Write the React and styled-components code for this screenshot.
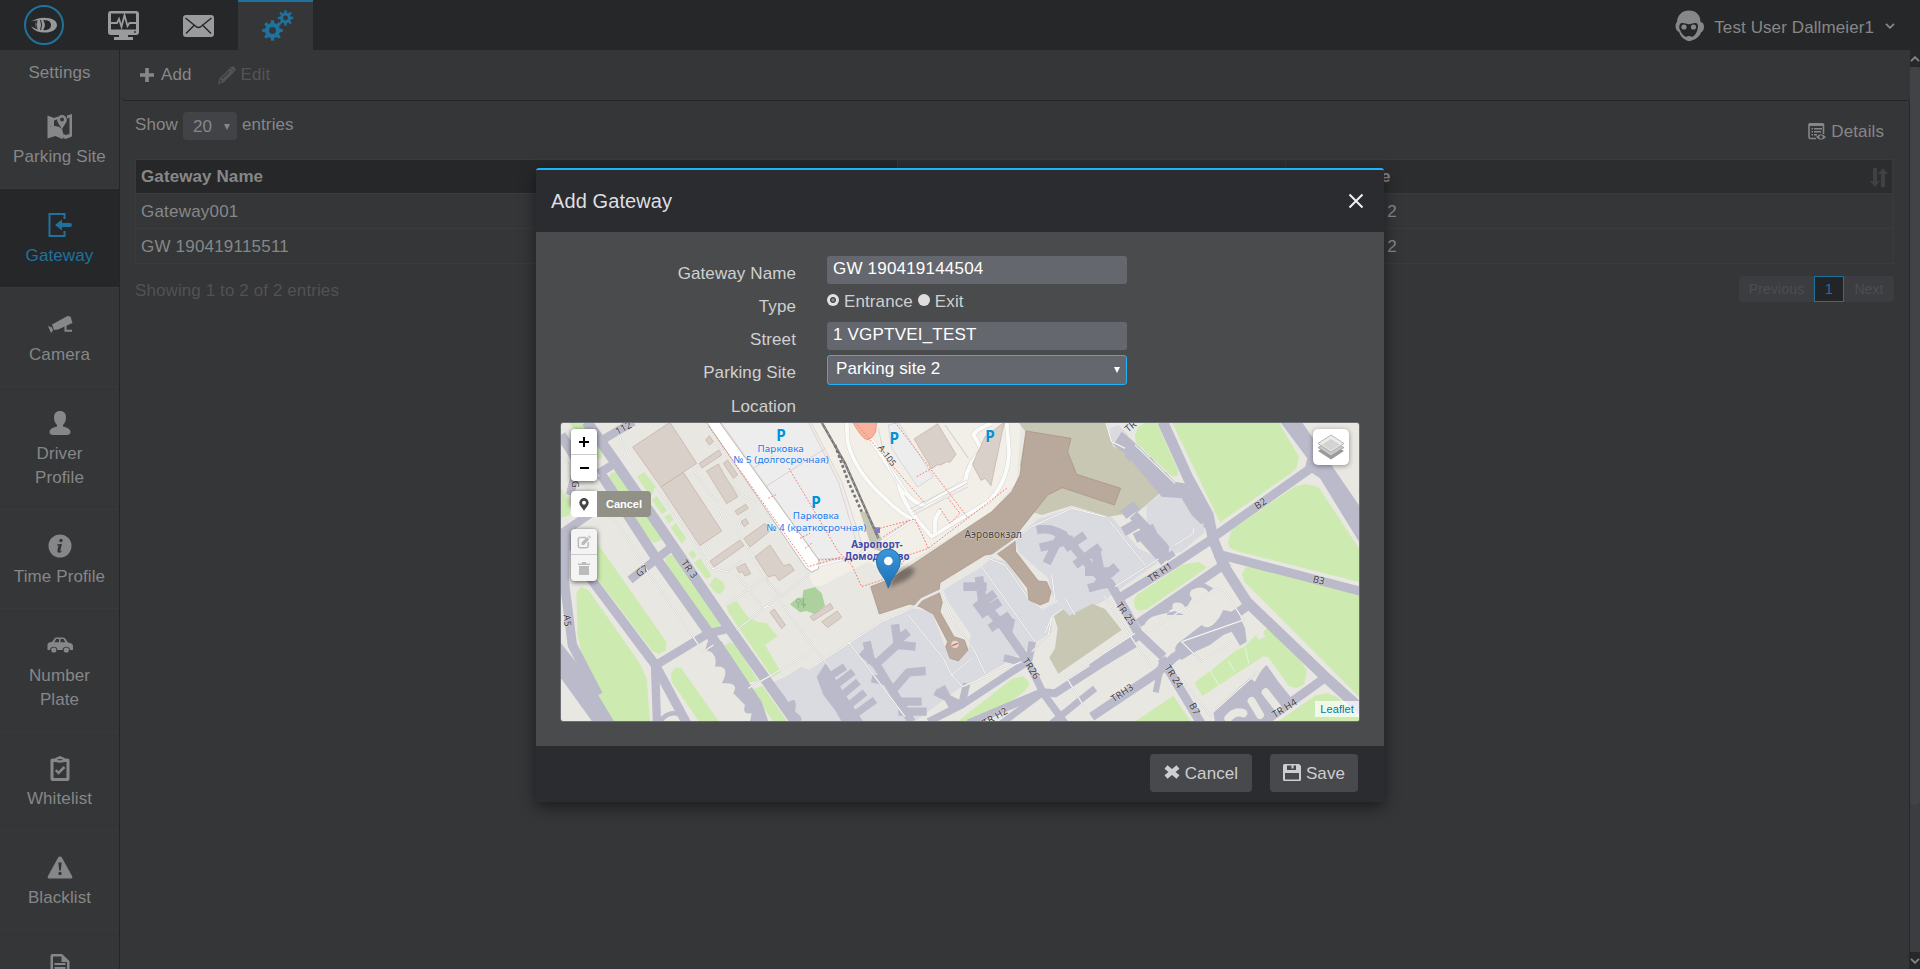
import React from "react";
import styled, { createGlobalStyle } from "styled-components";

const GlobalStyle = createGlobalStyle`
  * { box-sizing: border-box; }
  html, body { margin: 0; padding: 0; height: 100%; overflow: hidden; }
  body { background: #353638; color: #868788; font: 17px/24px "Liberation Sans", Arial, sans-serif; letter-spacing: 0.1px; }
  svg { display: block; }
`;

const Screen = styled.div`
  width: 1920px;
  height: 969px;
  display: flex;
  flex-direction: column;
  position: relative;
  overflow: hidden;
`;

/* ---------- top bar ---------- */
const TopBar = styled.header`
  height: 50px;
  flex: none;
  display: flex;
  background: #262729;
`;
const TopTab = styled.div`
  width: ${(p) => p.$w || 75}px;
  height: 50px;
  display: flex;
  align-items: center;
  justify-content: center;
  color: ${(p) => (p.$active ? "#20729c" : "#9a9b9c")};
  background: ${(p) => (p.$active ? "#353638" : "transparent")};
  border-top: 2px solid ${(p) => (p.$active ? "#20729c" : "transparent")};
  padding-left: ${(p) => (p.$active ? 5 : 0)}px;
  padding-bottom: ${(p) => p.$lift || 1}px;
`;
const UserMenu = styled.div`
  margin-left: auto;
  padding: 2px 25px 0 0;
  display: flex;
  align-items: center;
  color: #868788;
`;
const UserName = styled.span`
  margin: 3px 11px 0 9px;
`;

/* ---------- main frame ---------- */
const Frame = styled.div`
  flex: 1;
  min-height: 0;
  display: flex;
`;
const Sidebar = styled.nav`
  width: 120px;
  flex: none;
  border-right: 1px solid #242527;
  overflow: hidden;
  text-align: center;
`;
const SidebarTitle = styled.div`
  padding: 11px 0 5px;
`;
const SideItem = styled.div`
  padding: 24px 8px 19px;
  border-bottom: 1px solid #393a3c;
  color: ${(p) => (p.$active ? "#20729c" : "#868788")};
  background: ${(p) => (p.$active ? "#262729" : "transparent")};
`;
const SideIcon = styled.div`
  height: 24px;
  margin-bottom: 7px;
  display: flex;
  align-items: center;
  justify-content: center;
`;
const SideLabel = styled.div`
  margin: 0 -8px;
  white-space: pre-line;
`;
const Main = styled.main`
  flex: 1;
  min-width: 0;
  display: flex;
  flex-direction: column;
`;
const Toolbar = styled.div`
  height: 51px;
  flex: none;
  margin-left: 2px;
  border-bottom: 1px solid #242527;
  border-radius: 0 0 4px 4px;
  display: flex;
  padding: 13px 0 0 18px;
  gap: 26px;
`;
const Tool = styled.div`
  display: flex;
  gap: ${(p) => p.$gap}px;
  height: 24px;
  color: ${(p) => (p.$disabled ? "#535456" : "#868788")};
  svg { margin-top: ${(p) => p.$top}px; }
`;
const Content = styled.section`
  flex: 1;
  min-height: 0;
  border-right: 1px solid #262729;
  padding: 11px 15px 0 15px;
`;
const ListHead = styled.div`
  display: flex;
  justify-content: space-between;
  height: 47px;
`;
const Length = styled.div`
  display: flex;
  gap: 5px;
  line-height: 26px;
`;
const LengthSelect = styled.div`
  width: 54px;
  height: 28px;
  border-radius: 4px;
  background: #424346;
  display: flex;
  justify-content: space-between;
  align-items: center;
  padding: 2px 7px 0 10px;
`;
const Details = styled.div`
  display: flex;
  gap: 5px;
  padding: 8px 10px 0 0;
  svg { margin-top: 3px; }
`;
const Table = styled.div`
  display: grid;
  grid-template-columns: 762px 388px 1fr;
  border: 1px solid #3a3b3d;
  border-bottom: 0;
`;
const HeadCell = styled.div`
  height: 34px;
  display: flex;
  align-items: center;
  justify-content: space-between;
  padding: 1px 4px 0 5px;
  font-weight: bold;
  background: ${(p) => (p.$sorted ? "#262729" : "#2c2d2f")};
  border-right: 1px solid #353638;
  border-bottom: 1px solid #3a3b3d;
  color: #868788;
  svg { margin-left: auto; color: #404144; }
`;
const Cell = styled.div`
  height: 35px;
  padding: 6px 5px 4px;
  border-bottom: 1px solid #3a3b3d;
  letter-spacing: 0.2px;
`;
const ListFoot = styled.div`
  display: flex;
  justify-content: space-between;
  padding-top: 12px;
  color: #515254;
`;
const Info = styled.div`
  padding-top: 3px;
`;
const Pager = styled.div`
  display: flex;
  height: 26px;
  background: #3c3d40;
  border-radius: 4px;
  font-size: 14px;
`;
const PageBtn = styled.div`
  width: ${(p) => p.$w}px;
  text-align: center;
  line-height: 25px;
  color: ${(p) => (p.$active ? "#20729c" : "#4c4d50")};
  background: ${(p) => (p.$active ? "#232426" : "transparent")};
  border: 1px solid ${(p) => (p.$active ? "#20729c" : "transparent")};
`;
const Scrollbar = styled.div`
  width: 10px;
  flex: none;
  display: flex;
  flex-direction: column;
  background: #3c3d41;
`;
const ScrollBtn = styled.div`
  height: 17px;
  background: #27282a;
  display: flex;
  align-items: center;
  justify-content: center;
`;
const Thumb = styled.div`
  height: 738px;
  margin-bottom: 147px;
  background: #424347;
  border-radius: 5px;
`;

/* ---------- dialog ---------- */
const Backdrop = styled.div`
  position: absolute;
  inset: 0;
  display: flex;
  justify-content: center;
  align-items: flex-start;
  padding-top: 168px;
`;
const Dialog = styled.div`
  width: 848px;
  border-top: 2px solid #1eb3fb;
  border-radius: 3px;
  overflow: hidden;
  box-shadow: 0 5px 15px rgba(0, 0, 0, 0.5);
  color: #cfd0d1;
`;
const DialogHead = styled.div`
  height: 62px;
  background: #2b2c30;
  display: flex;
  align-items: center;
  justify-content: space-between;
  padding: 0 20px 0 15px;
  font-size: 20px;
  color: #dedfe0;
`;
const DialogBody = styled.div`
  background: #4a4b4d;
  padding: 24px 24px 24px;
`;
const FormRow = styled.div`
  display: grid;
  grid-template-columns: 236px 300px;
  column-gap: 31px;
  height: ${(p) => p.$h || 33}px;
`;
const Label = styled.div`
  text-align: right;
  line-height: 35px;
`;
const Field = styled.div`
  height: 28px;
  line-height: 26px;
  background: #65676f;
  border-radius: 3px;
  padding-left: 6px;
  color: #fff;
  letter-spacing: 0.2px;
`;
const SelectField = styled.div`
  height: 30px;
  line-height: 26px;
  background: #65676f;
  border: 1px solid #1eb3fb;
  border-radius: 3px;
  padding: 0 6px 2px 8px;
  color: #fff;
  display: flex;
  justify-content: space-between;
  align-items: center;
  svg { margin-top: 2px; }
`;
const RadioGroup = styled.div`
  display: flex;
  height: 24px;
  line-height: 25px;
`;
const Radio = styled.span`
  width: 12px;
  height: 12px;
  margin: 5px 5px 0 0;
  border-radius: 50%;
  background: ${(p) =>
    p.$on
      ? "radial-gradient(circle, #8a8b8c 0 1px, #4c4d50 2px 2.6px, #e2e2e2 3.5px)"
      : "#dedede"};
`;
const RadioText = styled.span`
  margin-right: 5px;
`;
const DialogFoot = styled.div`
  height: 56px;
  background: #2b2c30;
  display: flex;
  justify-content: flex-end;
  gap: 18px;
  padding: 8px 26px 0 0;
`;
const FootButton = styled.div`
  width: ${(p) => p.$w}px;
  height: 38px;
  border-radius: 4px;
  background: #48494d;
  color: #cdcecf;
  display: flex;
  align-items: center;
  justify-content: center;
  gap: 5px;
  padding-top: 1px;
  svg { margin-top: -3px; }
`;

/* ---------- map ---------- */
const MapBox = styled.div`
  position: relative;
  width: 800px;
  height: 300px;
  border: 1px solid #6a6c73;
  border-radius: 3px;
  overflow: hidden;
`;
const ControlStack = styled.div`
  position: absolute;
  left: 10px;
  top: 6px;
  width: 81px;
  display: flex;
  flex-direction: column;
`;
const ControlGroup = styled.div`
  width: 26px;
  border-radius: 4px;
  box-shadow: 0 1px 5px rgba(0, 0, 0, 0.65);
  margin-bottom: 10px;
`;
const ControlButton = styled.div`
  width: 26px;
  height: 26px;
  display: flex;
  align-items: center;
  justify-content: center;
  background: ${(p) => (p.$disabled ? "#f4f4f4" : "#fff")};
  color: ${(p) => (p.$disabled ? "#bbb" : "#464646")};
  border-radius: ${(p) => p.$radius || "4px"};
  border-bottom: ${(p) => (p.$line ? "1px solid #ccc" : "0")};
`;
const DrawRow = styled.div`
  display: flex;
  height: 26px;
  margin-bottom: 12px;
`;
const DrawAction = styled.div`
  width: 54px;
  background: #919187;
  color: #fff;
  font-size: 11px;
  font-weight: bold;
  line-height: 26px;
  letter-spacing: 0;
  text-align: center;
  border-radius: 0 4px 4px 0;
`;
const LayersButton = styled.div`
  position: absolute;
  right: 10px;
  top: 6px;
  width: 36px;
  height: 36px;
  background: #fff;
  border-radius: 5px;
  box-shadow: 0 1px 5px rgba(0, 0, 0, 0.4);
  display: flex;
  align-items: center;
  justify-content: center;
`;
const Attribution = styled.div`
  position: absolute;
  right: 0;
  bottom: 4px;
  height: 16px;
  padding: 0 5px;
  background: rgba(255, 255, 255, 0.7);
  color: #0078a8;
  font-size: 11px;
  line-height: 16px;
`;

const I = ({ w, h = w, vb, children }) => (
  <svg width={w} height={h} viewBox={vb || `0 0 ${w} ${h}`} fill="currentColor">
    {children}
  </svg>
);

const gearPath = (cx, cy, r, tooth, n) => {
  let d = "";
  const step = (Math.PI * 2) / n;
  for (let i = 0; i < n; i++) {
    const a = i * step - Math.PI / 2;
    [[-0.29, r], [-0.19, r + tooth], [0.19, r + tooth], [0.29, r]].forEach(([o, rad], k) => {
      const t = a + o * step;
      d += `${i === 0 && k === 0 ? "M" : "L"}${(cx + Math.cos(t) * rad).toFixed(2)},${(cy + Math.sin(t) * rad).toFixed(2)}`;
    });
  }
  const h = r * 0.45;
  return `${d}ZM${cx - h},${cy}a${h},${h} 0 1,0 ${2 * h},0a${h},${h} 0 1,0 ${-2 * h},0Z`;
};

const LogoIcon = () => (
  <I w={40}>
    <circle cx="20" cy="20" r="19" fill="none" stroke="#20729c" strokeWidth="2" />
    <path fillRule="evenodd" fill="#97989a" d="M7 16.500c4-2.500 8-3.800 13-3.800 8 0 13 3 13 7.300s-5 7.600-12 7.600c-6 0-11-1.500-14-6.600 2 1.600 4 2.600 6 3-2.500-3.500-2-6.500 0-8.500-2 0-4 .2-6 1zM19 15.500c2.500 2.500 2.500 7 0 9.500 5 .8 8-1.500 8-5s-3-5.500-8-4.500z" />
    <ellipse cx="14.500" cy="20" rx="2" ry="4.800" fill="#97989a" />
    <path d="M13 15.200q-2 4.600 0 9.200M16.500 15q2.300 5 0 10" fill="none" stroke="#262729" strokeWidth="1" />
  </I>
);
const MonitorIcon = () => (
  <I w={31} h={30}>
    <path fillRule="evenodd" d="M3 0h25a3 3 0 0 1 3 3v18a3 3 0 0 1-3 3H3a3 3 0 0 1-3-3V3a3 3 0 0 1 3-3zM3 2.500v16h25v-16zM11 24h9v2h5v3H6v-3h5z" />
    <path d="M3 12h6l2-4 2.500 8 3-12 3 11 2-3H28" fill="none" stroke="currentColor" strokeWidth="1.800" />
    <circle cx="27" cy="21" r=".9" fill="#262729" />
  </I>
);
const MailIcon = () => (
  <I w={31} h={22}>
    <rect width="31" height="22" rx="3" />
    <path d="M2.500 3l10.500 8.500q2.500 2 5 0L28.500 3M3 18.500l8-8M28 18.500l-8-8" fill="none" stroke="#262729" strokeWidth="1.500" />
  </I>
);
const GearsIcon = () => (
  <I w={32} h={31}>
    <path fillRule="evenodd" d={gearPath(10.5, 20.5, 7.6, 2.8, 8)} />
    <path fillRule="evenodd" d={gearPath(23.5, 8, 5.4, 2.4, 8)} />
  </I>
);
const UserIcon = () => (
  <I w={30} h={32}>
    <path fillRule="evenodd" d="M14 .5C21 .5 25.500 5 25.500 12c2.500.5 3.500 2 3.500 5s-1.500 5-3.500 5.200C24 26 21 29.500 17.500 30c-1.500 1.500-5 1.500-6.500 0C7.500 28.500 5.500 26 4 22 1.500 21 .5 18.500.5 16c0-2 .5-3 1.500-4C2.500 5 7 .5 14 .5zM5.500 13.500c-2 2-1.500 5-.2 7C6.500 23.500 8.500 26 11 27c1.500-1.500 4.500-1.500 6 0 3.500-1.500 5.500-5.500 6-10.500 0-1.500-.3-2.500-1-3-3-1.500-5 .7-8 .7s-5.500-2-8.500-.7z" />
    <circle cx="9" cy="17" r="2.600" /><circle cx="18.500" cy="17" r="2.600" />
    <path d="M26 19q-1 7-8 9.500" fill="none" stroke="currentColor" strokeWidth="2" />
  </I>
);
const ParkingIcon = () => (
  <I w={26} h={25}>
    <path fillRule="evenodd" d="M.5 1.500L7 4l4-1.500V5L7 6.500v7l-4-1V21l5-3 8 5.500V25l-2-.5-5.500-2.500L.5 24.500zM20 1.500l5-1.500v22.500L18.500 25l-2-1v-4l2 1 4-1V3.500L20 4.500z" />
    <path d="M3 13q7-3 12 2l2.500 9L8 20l-5 2z" />
    <path fillRule="evenodd" d="M15 1a4.800 4.800 0 0 1 4.800 4.800C19.800 9 17 11 15 15.500 13 11 10.200 9 10.200 5.800A4.800 4.800 0 0 1 15 1zm0 2.500a2 2 0 1 0 0 4 2 2 0 0 0 0-4z" />
  </I>
);
const GatewayIcon = () => (
  <I w={24}>
    <path d="M16.500 6V1H1.500v22h15v-5" fill="none" stroke="currentColor" strokeWidth="2" />
    <path d="M7 12l7-5.500V10h8a2 2 0 0 1 0 4h-8v3.500z" />
  </I>
);
const CameraIcon = () => (
  <I w={26} h={18}>
    <path d="M5 9.500L20.500 1l3 .5L25.500 8 11 14.500l-4 .5z" />
    <path d="M1 11l4 1.500 1 3L4 18z" />
    <path d="M18.500 11v4.800H25" fill="none" stroke="currentColor" strokeWidth="2" />
  </I>
);
const PersonIcon = () => (
  <I w={22} h={24}>
    <path d="M11 0c4 0 6 2.500 6 6.500 0 3.500-1.500 6-3 7.500v1.500c5 1 7.500 3 7.500 5.500 0 2-1.500 3-4 3h-13c-2.500 0-4-1-4-3 0-2.500 2.500-4.500 7.500-5.500V14c-1.500-1.500-3-4-3-7.500C5 2.500 7 0 11 0z" />
  </I>
);
const InfoIcon = () => (
  <I w={24}>
    <circle cx="12" cy="12" r="11.500" />
    <g fill="#353638"><circle cx="13" cy="6.500" r="1.700" /><path d="M9 10.500l5-.8-1.800 7.500q1 .2 2-.7-1 2.500-3.500 2.200-1.800-.3-1.300-2.500l1-4.400q-.4-.6-1.400-.6z" /></g>
  </I>
);
const CarIcon = () => (
  <I w={26} h={16}>
    <path fillRule="evenodd" d="M9 .5h7q2 0 3 2l2 3q5 .5 5 3.500v4h-3a3.800 3.800 0 0 0-7.500 0h-5a3.800 3.800 0 0 0-7.500 0H.5V8q0-3 4.500-3l2-3q.8-1.500 2-1.500zM9 2L7.500 5.300H12V2zm4.500 0v3.300h4.800L16.500 2z" />
    <circle cx="6.800" cy="13" r="2.600" /><circle cx="19.300" cy="13" r="2.600" />
  </I>
);
const ClipboardIcon = () => (
  <I w={20} h={25}>
    <path fillRule="evenodd" d="M2.500 2.500H5Q6 1 8 1q2-2 4 0 2 0 3 1.500h2.500q2 0 2 2V23q0 2-2 2h-15q-2 0-2-2V4.500q0-2 2-2zm1 3.500v16h13V6h-2q-4.500 1.500-9 0zM7 3.700q3 1.200 6 0Q10 2.500 7 3.700z" />
    <path d="M5.800 14l2.700 3 6-6" fill="none" stroke="currentColor" strokeWidth="2.500" />
  </I>
);
const WarningIcon = () => (
  <I w={26} h={23}>
    <path d="M13 .5q1.300 0 2 1.300l10 18.200q1 2.500-1 2.500H2q-2 0-1-2.500L11 1.800Q11.700.5 13 .5z" />
    <path d="M11.300 6.500h3.400l-.9 8h-1.600z" fill="#353638" /><circle cx="13" cy="17.500" r="1.700" fill="#353638" />
  </I>
);
const DocIcon = () => (
  <I w={20} h={24}>
    <path fillRule="evenodd" d="M2.500 0H12l7.500 7v15q0 2-2 2h-15q-2 0-2-2V2q0-2 2-2zM3 2.500v19h14V8h-5.500V2.500zM4.500 9h11v2h-11zm0 4h11v2h-11zm0 4h11v2h-11z" />
  </I>
);
const SortIcon = () => (
  <I w={18} h={19}>
    <path d="M3 0h4v13h3l-5 6-5-6h3zM11 19h4V6h3l-5-6-5 6h3z" />
  </I>
);
const DetailsIcon = () => (
  <I w={18} h={17}>
    <path d="M8 15.500H2.500q-1.500 0-1.500-1.500V1.500h14.500V11" fill="none" stroke="currentColor" strokeWidth="1.600" />
    <path d="M1 0h14.500v3H1zM3.500 5h1.500v1.500H3.500zm2.500 0h8v1.500H6zM3.500 8h1.500v1.500H3.500zM6 8h7v1.500H6zM3.500 11h1.500v1.500H3.500zM6 11h3v1.500H6z" />
    <path fillRule="evenodd" d="M8 14q5-5.500 10 0-5 5.500-10 0zm5-1.800a1.800 1.800 0 1 0 0 3.600 1.800 1.800 0 0 0 0-3.600z" />
  </I>
);
const CloseBold = () => (
  <I w={16} h={14}>
    <path d="M2 2l12 10M14 2L2 12" stroke="currentColor" strokeWidth="4.600" />
  </I>
);
const SaveIcon = () => (
  <I w={18} h={17}>
    <path fillRule="evenodd" d="M1.500 0H16l2 2v13.500q0 1.500-1.500 1.500h-15Q0 17 0 15.500v-14Q0 0 1.500 0zM4 1.500V6h9V1.500h-2.500v3h-2v-3zM2 9v6.500h14V9z" />
  </I>
);
const Caret = ({ w, h }) => (
  <I w={w} h={h} vb="0 0 6 6"><path d="M0 0h6L3 6z" /></I>
);
const Chevron = ({ up, w = 10 }) => (
  <I w={w} h={6} vb="0 0 10 6">
    <path d={up ? "M1 5.200l4-4 4 4" : "M1 .8l4 4 4-4"} fill="none" stroke="currentColor" strokeWidth="1.800" />
  </I>
);

/* ---------- map artwork: drawn in thirds of a pixel ---------- */
const G = "#cdebb0";
const T = "#bbbacb";
const grassWest = [
  "160,195 168,175 182,170 200,182 320,355 318,375 300,383 280,372 165,220",
  "246,185 268,170 301,215 290,241 270,222", "290,255 305,243 336,286 321,298",
  "327,306 345,296 356,314 342,324", "347,338 363,324 394,370 380,386",
  "400,415 414,405 426,422 412,432", "416,443 436,430 470,482 455,493",
  "463,510 480,485 503,500 510,520 495,538 480,532",
  "330,430 345,418 362,428 490,612 495,635 478,645 462,638 335,455",
  "127,385 335,682 332,706 312,718 292,708 127,492",
  "64,535 78,515 100,525 250,738 275,790 285,920 175,920 90,770 68,660",
  "348,775 360,758 378,758 492,920 432,920 350,800",
  "515,573 545,557 580,608 612,622 634,623 668,664 630,690 678,772 652,787 520,592",
  "508,692 525,681 542,690 610,798 578,803 510,707", "590,825 622,812 697,920 655,920",
  "40,20 86,20 142,105 142,130 122,130", "18,220 46,262 46,300 18,308",
];
const grassEast = [
  "230,20 550,20 612,125 605,158 588,175 375,322",
  "399,378 410,345 598,215 632,207 670,215 795,405 795,502 425,408 403,398",
  "441,478 452,457 480,455 795,540 795,848 448,500",
  "120,60 130,35 155,20 185,20 250,170 246,184 230,184 122,82",
  "117,555 125,540 262,450 310,440 333,455 330,462 155,583 130,588 118,575",
  "298,803 340,772 346,768 420,708 448,695 483,660 492,675 510,665 505,650 520,635 600,712 635,765 628,808 605,820 582,814 520,727 505,724 322,843",
  "120,920 235,842 288,920", "548,920 660,842 695,834 725,845 795,910 795,920",
];
const buildings = [
  "233,96 345,22 425,145 318,216", "318,216 385,172 500,348 435,392", "433,145 492,105 500,120 441,159",
  "455,168 490,147 508,180 549,245 515,266", "505,145 518,135 548,180 535,190", "452,75 463,62 475,80 463,90",
  "540,288 572,268 580,280 548,300", "558,320 573,311 581,325 568,335", "567,370 630,325 643,350 585,396",
  "465,438 555,375 567,392 477,456", "545,458 570,445 587,476 570,483 562,470 552,473",
  "600,425 645,390 686,452 705,447 718,466 672,497 660,480 640,486", "645,592 658,582 691,630 680,641",
  "765,605 826,565 835,580 775,617", "800,620 847,588 860,607 818,638",
  "1077,72 1148,26 1203,118 1185,142 1175,140 1158,150 1148,149 1130,161",
  "1252,148 1290,65 1350,20 1344,40 1308,212 1290,190 1278,196",
];
const PathPair = ({ d, w = 5 }) => (
  <g fill="none" strokeLinejoin="round">
    <path d={d} stroke="#cccccc" strokeWidth={w + 2} />
    <path d={d} stroke="#fbfbf9" strokeWidth={w} />
  </g>
);
const Tag = ({ x, y, r = 0, s = 29, c = "#3c3c3c", b, children }) => (
  <text x={x} y={y} fontSize={s} fill={c} fontWeight={b ? 700 : 400} textAnchor="middle" transform={`rotate(${r} ${x} ${y})`}
    stroke="#ffffff66" strokeWidth="3" paintOrder="stroke" letterSpacing="0.3" fontFamily='"Noto Sans", "DejaVu Sans", sans-serif'>
    {children}
  </text>
);

const MapArt = () => (
  <svg width="798" height="298" viewBox="18 24 2394 894">
    <rect x="0" y="0" width="2430" height="930" fill="#e8e7e1" />
    {/* town ground and car parks */}
    <polygon points="470,20 1398,20 1385,200 1310,290 1000,480 940,440 800,512 776,512 760,480 795,440" fill="#f2efe9" />
    <polygon points="498,22 768,22 860,200 925,400 900,428 790,432" fill="#ededee" stroke="#d8c9c4" strokeWidth="2" />
    <polygon points="1000,30 1030,22 1135,185 1088,216 1010,100" fill="#ededee" stroke="#ccc" strokeWidth="2" />
    <path d="M630,216L808,102M585,166L655,122M760,22L850,200L910,400M1170,30l70,100" fill="none" stroke="#d8c2bb" strokeWidth="2" />
    {/* aprons */}
    <g fill="#dadae1">
      <polygon points="645,805 690,787 740,755 765,765 985,618 1075,580 1130,590 1172,700 1205,745 1222,812 1080,920 735,920" />
      <polygon points="1165,525 1280,455 1310,430 1355,440 1420,540 1460,585 1510,560 1550,600 1490,605 1490,650 1350,745 1220,820 1200,740 1240,705 1248,660 1180,560" />
      <polygon points="1380,372 1450,312 1550,280 1620,300 1670,305 1750,400 1810,428 1805,445 1640,562 1550,600 1490,540 1480,490 1390,412" />
      <polygon points="1775,270 1815,240 1910,250 1950,350 1880,410 1835,420 1775,330" />
      <polygon points="1665,40 1690,30 1720,60 1700,100 1670,80" />
    </g>
    {/* rough ground */}
    <g fill="#c7c7b4">
      <polygon points="1390,22 1650,22 1675,95 1720,110 1760,165 1815,235 1750,290 1660,305 1550,272 1460,300 1430,290 1395,150 1412,50" />
      <polygon points="1497,603 1525,583 1543,602 1612,566 1650,582 1700,645 1510,776 1483,728 1500,700 1508,640" />
      <polygon points="915,290 935,290 980,370 980,410 950,400" />
    </g>
    <g fill={G}>
      {grassWest.map((p) => <polygon key={p} points={p} />)}
      <polygon points="1210,918 1370,792 1405,784 1424,805 1410,828 1290,918" />
      <g transform="translate(1620 0)">{grassEast.map((p) => <polygon key={p} points={p} />)}</g>
      <polygon points="705,568 728,548 742,548 745,526 780,516 800,535 810,572 780,598 755,588 735,592" fill="#add19e" />
    </g>
    {/* taxiways */}
    <g fill="none" stroke={T} strokeWidth="32" strokeLinejoin="round">
      <path d="M95,20L180,140L345,380L520,635L725,925" />
      <path d="M18,60L60,125M140,180L300,425L470,665L520,740" strokeWidth="30" />
      <path d="M30,350L110,495L300,748L395,925M30,340L28,500L52,690L130,840" strokeWidth="28" />
      <path d="M295,755L460,655L525,640M225,495L345,400M300,750L306,925M30,348L130,280M125,85L235,20M130,175L190,140M60,180L45,240" strokeWidth="25" />
      <path d="M310,925Q350,870 395,915" strokeWidth="14" />
    </g>
    <g fill={T}>
      <polygon points="18,685 90,775 178,920 112,920 18,790" />
      <path d="M465,660L500,680L620,860L640,920H585L590,895Q560,900 570,870L535,835Q555,800 500,805Q530,750 480,755Q490,710 450,705Z" />
      <path d="M650,800Q690,840 700,862Q730,840 720,890Q750,910 735,920L690,880Z" />
      <path d="M785,785L812,745L865,830L925,920H860L840,885L805,840Z" />
    </g>
    {/* stands */}
    <g fill="none" stroke={T} strokeWidth="22" strokeLinejoin="round">
      <path d="M815,790l55,-35M830,820l65,-50M850,850l60,-50M870,880l60,-48M890,905l70,-50" />
      <path d="M1020,628L1028,688L960,750M1030,690l52,5M1022,680l38,-30M935,680l15,65M920,710l45,40L1020,840L1070,920M1010,830L1060,772L1112,768M1020,860h80M1030,890h85M1000,800l-50,-10" strokeWidth="25" />
      <path d="M1272,485L1282,560L1345,635L1420,742M1225,515h70M1260,580L1320,535M1275,600l60,-40M1305,640L1365,600M1368,610l-10,45" strokeWidth="26" />
      <path d="M1445,345Q1510,330 1560,400L1610,460L1660,510M1475,445L1525,345M1455,398l100,-25M1530,400l60,-40M1560,450l75,-55M1600,520l70,-20M1590,470h70" strokeWidth="26" />
      <path d="M1432,680L1420,742L1465,835L1530,925M1347,728L1410,745L1220,870L1120,920M1235,805L1220,870L1140,830M1160,815L1200,890" strokeWidth="22" />
      <path d="M1240,925L1460,832L1500,835L1640,745L1740,685" strokeWidth="24" />
      <path d="M1340,925L1460,835" strokeWidth="20" />
      <path d="M1620,820L1570,860L1490,925" strokeWidth="20" />
    </g>
    <g transform="translate(1620 0)">
      <g fill="none" stroke={T} strokeWidth="30" strokeLinejoin="round">
        <path d="M203,20L280,190L340,300L355,375L385,450L455,560L690,785L800,885" strokeWidth="32" />
        <path d="M350,370L650,158M360,415L800,530M355,370L225,455L75,548M400,440L130,625M0,510L45,505L130,655L205,725M-10,905L185,775L240,725L310,680L460,570M200,730L318,925M695,785L500,925M125,665L-10,760" strokeWidth="27" />
        <path d="M200,745L182,832" strokeWidth="18" />
        <path d="M85,300l40,-30M85,350l60,-35M0,400l20,100M25,490l40,-35M115,300L200,390L230,430M120,370l60,-30M130,350l80,90" strokeWidth="30" />
        <path d="M95,130l40,-30M135,165l40,-30M175,215l45,-35" strokeWidth="22" />
      </g>
      <g fill={T}>
        <polygon points="555,20 620,20 795,275 795,385 675,190 630,160 637,130" />
        <polygon points="55,90 80,50 105,70 240,200 300,210 345,310 350,360 290,300 260,250 200,245 95,120" />
        <path d="M262,675L320,630Q350,655 385,585L430,595L450,640L455,680L435,692L410,650L385,660L345,690L300,710L260,735Q220,700 262,675Z" />
        <path d="M215,600Q235,560 265,600M275,580Q300,520 330,540L355,520L320,500L230,560L190,600Z" />
        <path d="M355,890L420,830Q440,810 465,790L480,800Q500,760 515,750L550,800L590,850L540,880L500,920H360Z" />
      </g>
      <g fill="none" stroke="#e8e7e1" strokeWidth="24" strokeLinecap="round">
        <path d="M470,858l25,42M512,832l35,45M400,910q20,-25 45,-15" />
      </g>
      <g fill="#e8e7e1" stroke="#dddcd8" strokeWidth="1">
        <path d="M222,412L280,372Q330,345 325,325L312,330L290,355L222,398Z" fill="#dadae1" />
        <path d="M150,625Q175,590 215,605Q240,625 275,600Q220,590 235,565Q265,555 275,588L320,570Q270,545 290,525Q330,505 345,540L370,518L420,580Q360,580 375,605Q330,650 315,625L260,665Q240,690 200,690Z" stroke="none" />
      </g>
      <g fill="none" stroke="#fff" strokeWidth="1.500"><path d="M400,738l20,32M450,696l12,50M346,768l25,42" /></g>
    </g>
    {/* service roads */}
    <PathPair d="M18,120L90,210L190,330L285,480L445,710L475,690" w={3} />
    <PathPair d="M190,60L215,105L205,128M285,185L470,460L520,470L560,435" w={3} />
    <PathPair d="M470,80L500,100L415,160L430,190L485,260L500,300L450,410M525,205L560,240L600,262L600,290L560,310L545,350L580,400L665,545L780,705L820,750" w={3} />
    <PathPair d="M510,570L630,490L680,545L790,455M545,645L670,545M580,820L780,705M545,480L625,578L660,570" w={3} />
    <PathPair d="M765,760L985,618L1060,585L1090,555L1170,520M880,680L1050,905M1060,600L1165,730L1190,780L1222,815L1400,740M1165,540L1200,630L1255,700L1290,775M1190,780L1250,730" w={3} />
    <PathPair d="M1300,430L1430,335L1550,280L1650,305M1300,430L1350,450L1420,550L1460,580L1500,555L1490,480M1490,610L1480,660L1430,710M1530,780L1590,880M1280,455L1440,680M1530,550L1560,600M1530,790L1740,655M1645,540L1790,760M1470,655L1490,605L1525,580" w={3} />
    <PathPair d="M1665,320L1770,450M1680,515L1810,432M1655,30L1670,80L1710,100M1740,90L1860,205M1860,390L1915,355V340M1770,655L1985,520L2010,530L2065,615L1880,680L1940,740L2030,680M1870,780L1965,900L2110,770" w={3} />
    {/* streets */}
    <polygon points="455,22 494,22 792,436 790,462 770,471 752,458" fill="#fff" stroke="#bbb" strokeWidth="3" />
    <PathPair d="M790,452L920,420L1080,310" w={5} />
    <PathPair d="M875,22L878,80Q900,170 990,250Q1050,310 1090,318L1130,365L1300,260Q1360,200 1362,110L1355,22" w={12} />
    <PathPair d="M940,60L1040,215Q1070,265 1110,272L1230,200Q1240,140 1280,110Q1270,80 1255,60Q1260,45 1310,25M1030,200Q1040,260 1090,318M1140,355Q1135,300 1160,285" w={13} />
    <path d="M1065,282L1235,195M1070,292L1238,205M1075,300L1240,215M970,40Q990,160 1050,230M1170,30l70,98" stroke="#ccc" strokeWidth="2" fill="none" />
    <path d="M895,22h70L962,50Q950,75 935,74Q920,70 895,25Z" fill="#f9b29c" stroke="#e08a74" strokeWidth="2" />
    {/* railway */}
    <path d="M800,22L870,145L935,290L970,370" fill="none" stroke="#777" strokeWidth="7" />
    <path d="M800,22L870,145L935,290L970,370" fill="none" stroke="#bbb" strokeWidth="2" strokeDasharray="8 10" />
    <path d="M840,90L880,200L920,290" fill="none" stroke="#777" strokeWidth="8" strokeDasharray="9 7" />
    <rect x="958" y="337" width="17" height="17" fill="#7d7db8" />
    {/* footpaths */}
    <path d="M462,35L760,455L860,425M702,160L850,410L890,450L920,515L1010,485L1060,420L1120,400L1355,220M790,435L900,430M955,345L1080,312L1120,400M1020,22L1240,310M900,22L1110,265M1155,280L1185,325L1215,295L1180,250M640,250l25,-12M735,370l30,-15M985,365l80,-50M1085,185l45,-25M750,400l20,-15" fill="none" stroke="#f4796e" strokeWidth="3" strokeDasharray="5 5" />
    {/* buildings */}
    <g fill="#d9d0c9" stroke="#c4aea3" strokeWidth="2">{buildings.map((p) => <polygon key={p} points={p} />)}</g>
    <polygon fill="#b9a99c" stroke="#a8917f" strokeWidth="2" points="1413,48 1548,70 1538,110 1565,178 1650,205 1697,220 1678,270 1522,218 1478,240 1395,345 1380,375 1382,410 1450,498 1475,500 1488,530 1480,560 1455,570 1422,555 1418,520 1355,440 1325,415 1290,420 1155,503 1152,530 1162,562 1155,590 1197,665 1228,675 1239,705 1210,738 1185,730 1172,695 1178,680 1135,597 1095,575 1065,567 973,597 947,515 1010,490 1310,290 1370,230 1395,180" />
    <path d="M1308,425L1385,370M1075,580L1100,553L1170,520" stroke="#e8e7e8" strokeWidth="7" fill="none" />
    <circle cx="1200" cy="688" r="11" fill="#e4d8d0" /><path d="M1192,692l16,-7" stroke="#e06060" strokeWidth="4" />
    <g fill="none" stroke="#7fae7c" strokeWidth="2"><circle cx="730" cy="558" r="6" /><path d="M730,564v14M746,575v-25l-7,18h14zM746,568v10" /></g>
    {/* labels */}
    <Tag x={210} y={48} r={-28}>112</Tag>
    <Tag x={50} y={208} r={90}>G</Tag>
    <Tag x={267} y={476} r={-35}>G7</Tag>
    <Tag x={395} y={468} r={54}>TR 3</Tag>
    <Tag x={27} y={618} r={84}>A5</Tag>
    <Tag x={678} y={77} s={46} c="#0092da" b>P</Tag>
    <Tag x={783} y={278} s={46} c="#0092da" b>P</Tag>
    <Tag x={1018} y={86} s={46} c="#0092da" b>P</Tag>
    <Tag x={1305} y={80} s={46} c="#0092da" b>P</Tag>
    <Tag x={677} y={110} s={29.5} c="#2079f0">Парковка</Tag>
    <Tag x={678} y={145} s={29.5} c="#2079f0">№ 5 (долгосрочная)</Tag>
    <Tag x={783} y={312} s={29.5} c="#2079f0">Парковка</Tag>
    <Tag x={784} y={347} s={29.5} c="#2079f0">№ 4 (краткосрочная)</Tag>
    <Tag x={966} y={399} s={29.5} c="#4048a8" b>Аэропорт-</Tag>
    <Tag x={966} y={434} s={29.5} c="#4048a8" b>Домодедово</Tag>
    <Tag x={1315} y={370} s={30} c="#444">Аэровокзал</Tag>
    <Tag x={989} y={127} r={54} s={26}>A-105</Tag>
    <Tag x={1420} y={766} r={57}>TR26</Tag>
    <Tag x={1325} y={914} r={-30}>TR H2</Tag>
    <g transform="translate(1620 0)">
      <Tag x={113} y={42} r={-40}>TR</Tag>
      <Tag x={502} y={274} r={-34}>B2</Tag>
      <Tag x={669} y={505} r={14}>B3</Tag>
      <Tag x={201} y={480} r={-33}>TR H1</Tag>
      <Tag x={84} y={602} r={54}>TR 25</Tag>
      <Tag x={228} y={790} r={57}>TR 24</Tag>
      <Tag x={87} y={842} r={-34}>TRH3</Tag>
      <Tag x={290} y={886} r={62}>B7</Tag>
      <Tag x={574} y={888} r={-32}>TR H4</Tag>
    </g>
    {/* marker */}
    <defs>
      <linearGradient id="pin" x1="0" y1="0" x2="0" y2="1"><stop offset="0" stopColor="#3c97d8" /><stop offset="1" stopColor="#1b6fb8" /></linearGradient>
      <filter id="soft" x="-30%" y="-30%" width="160%" height="160%"><feGaussianBlur stdDeviation="6" /></filter>
    </defs>
    <path d="M1000,518L1018,478Q1050,445 1080,462Q1075,490 1030,505Z" fill="#000" opacity=".35" filter="url(#soft)" />
    <path d="M1000,519Q995,498 975,472Q964,455 964,438A36,36 0 0 1 1036,438Q1036,455 1025,472Q1005,498 1000,519Z" fill="url(#pin)" stroke="#2a6ca5" strokeWidth="3" />
    <circle cx="1000" cy="438" r="13" fill="#fff" />
  </svg>
);

const sideItems = [
  ["Parking Site", <ParkingIcon />],
  ["Gateway", <GatewayIcon />, true],
  ["Camera", <CameraIcon />],
  ["Driver\nProfile", <PersonIcon />],
  ["Time Profile", <InfoIcon />],
  ["Number\nPlate", <CarIcon />],
  ["Whitelist", <ClipboardIcon />],
  ["Blacklist", <WarningIcon />],
  ["", <DocIcon />],
];

const GatewayMap = () => (
  <MapBox>
    <MapArt />
    <ControlStack>
      <ControlGroup>
        <ControlButton $radius="4px 4px 0 0" $line>
          <I w={12}><path d="M1 6h10M6 1v10" stroke="#000" strokeWidth="2" /></I>
        </ControlButton>
        <ControlButton $radius="0 0 4px 4px">
          <I w={12}><path d="M2 6h9" stroke="#000" strokeWidth="2" /></I>
        </ControlButton>
      </ControlGroup>
      <DrawRow>
        <ControlGroup>
          <ControlButton $radius="4px 0 0 4px">
            <I w={10} h={13}><path fillRule="evenodd" d="M5 0a4.700 4.700 0 0 1 4.700 4.700C9.700 8 6.500 9.500 5 13 3.500 9.500.3 8 .3 4.700A4.700 4.700 0 0 1 5 0zm0 2.800a2 2 0 1 0 0 4 2 2 0 0 0 0-4z" /></I>
          </ControlButton>
        </ControlGroup>
        <DrawAction>Cancel</DrawAction>
      </DrawRow>
      <ControlGroup>
        <ControlButton $radius="4px 4px 0 0" $line $disabled>
          <I w={14}><path d="M9 2.500H3q-1.700 0-1.700 1.700V11q0 1.700 1.700 1.700h6.500q1.700 0 1.700-1.700V7" fill="none" stroke="currentColor" strokeWidth="1.500" /><path d="M4.500 10V7.500L10 2l2.300 2.300L7 10zM11 1.200l1-.9L14 2.500l-1 .8z" /></I>
        </ControlButton>
        <ControlButton $radius="0 0 4px 4px" $disabled>
          <I w={12} h={13}><path d="M4 0h4v1.500h4V3H0V1.500h4zM1 4h10v9H1z" /></I>
        </ControlButton>
      </ControlGroup>
    </ControlStack>
    <LayersButton>
      <I w={26}>
        <path d="M0 17l13-8 13 8-13 8.500z" fill="#9b9b9b" />
        <path d="M0 13.500l13-8 13 8L13 22z" fill="#c8c8c8" stroke="#8a8a8a" strokeWidth=".6" />
        <path d="M0 9.500L13 1l13 8.500L13 18z" fill="#ececec" stroke="#a5a5a5" strokeWidth=".8" />
        <path d="M4 10.500L13 5l9 5.500-9 6z" fill="#d3d3d3" />
      </I>
    </LayersButton>
    <Attribution>Leaflet</Attribution>
  </MapBox>
);

export default function App() {
  return (
    <Screen>
      <GlobalStyle />
      <TopBar>
        <TopTab $w={88} $lift={2}><LogoIcon /></TopTab>
        <TopTab $w={71}><MonitorIcon /></TopTab>
        <TopTab $w={79}><MailIcon /></TopTab>
        <TopTab $active><GearsIcon /></TopTab>
        <UserMenu>
          <UserIcon />
          <UserName>Test User Dallmeier1</UserName>
          <Chevron />
        </UserMenu>
      </TopBar>
      <Frame>
        <Sidebar>
          <SidebarTitle>Settings</SidebarTitle>
          {sideItems.map(([label, icon, active], i) => (
            <SideItem key={i} $active={active}>
              <SideIcon>{icon}</SideIcon>
              <SideLabel>{label}</SideLabel>
            </SideItem>
          ))}
        </Sidebar>
        <Main>
          <Toolbar>
            <Tool $gap={7} $top={5}>
              <I w={14}><path d="M5.200 0h3.600v5.200H14v3.600H8.800V14H5.200V8.800H0V5.200h5.200z" /></I>
              Add
            </Tool>
            <Tool $gap={5} $top={3} $disabled>
              <I w={18}><path fillRule="evenodd" d="M12 2l4 4L5.500 16.500 0 18l1.500-5.500zM13 1q1.500-1.500 3 0l1 1q1.500 1.500 0 3l-.7.600-4-4zM2.500 13.500l-.8 2.800 2.800-.8zM11 5l-7.500 7.300.8.700L11.800 5.800z" /></I>
              Edit
            </Tool>
          </Toolbar>
          <Content>
            <ListHead>
              <Length>
                Show
                <LengthSelect>20 <Caret w={6} h={6} /></LengthSelect>
                entries
              </Length>
              <Details><DetailsIcon />Details</Details>
            </ListHead>
            <Table>
              <HeadCell $sorted>Gateway Name<SortIcon /></HeadCell>
              <HeadCell><SortIcon /></HeadCell>
              <HeadCell>Parking Site<SortIcon /></HeadCell>
              <Cell>Gateway001</Cell><Cell /><Cell>Parking site 2</Cell>
              <Cell>GW 190419115511</Cell><Cell /><Cell>Parking site 2</Cell>
            </Table>
            <ListFoot>
              <Info>Showing 1 to 2 of 2 entries</Info>
              <Pager>
                <PageBtn $w={75}>Previous</PageBtn>
                <PageBtn $w={30} $active>1</PageBtn>
                <PageBtn $w={50}>Next</PageBtn>
              </Pager>
            </ListFoot>
          </Content>
        </Main>
        <Scrollbar>
          <ScrollBtn><Chevron up /></ScrollBtn>
          <Thumb />
          <ScrollBtn><Chevron /></ScrollBtn>
        </Scrollbar>
      </Frame>
      <Backdrop>
        <Dialog>
          <DialogHead>
            Add Gateway
            <I w={16}><path d="M1.500 1.500l13 13M14.500 1.500l-13 13" stroke="#f0f0f0" strokeWidth="2" /></I>
          </DialogHead>
          <DialogBody>
            <FormRow><Label>Gateway Name</Label><Field>GW 190419144504</Field></FormRow>
            <FormRow>
              <Label>Type</Label>
              <RadioGroup>
                <Radio $on /><RadioText>Entrance</RadioText>
                <Radio /><RadioText>Exit</RadioText>
              </RadioGroup>
            </FormRow>
            <FormRow><Label>Street</Label><Field>1 VGPTVEI_TEST</Field></FormRow>
            <FormRow $h={34}><Label>Parking Site</Label><SelectField>Parking site 2<Caret w={6} h={6} /></SelectField></FormRow>
            <FormRow><Label>Location</Label></FormRow>
            <GatewayMap />
          </DialogBody>
          <DialogFoot>
            <FootButton $w={102}><CloseBold />Cancel</FootButton>
            <FootButton $w={88}><SaveIcon />Save</FootButton>
          </DialogFoot>
        </Dialog>
      </Backdrop>
    </Screen>
  );
}
